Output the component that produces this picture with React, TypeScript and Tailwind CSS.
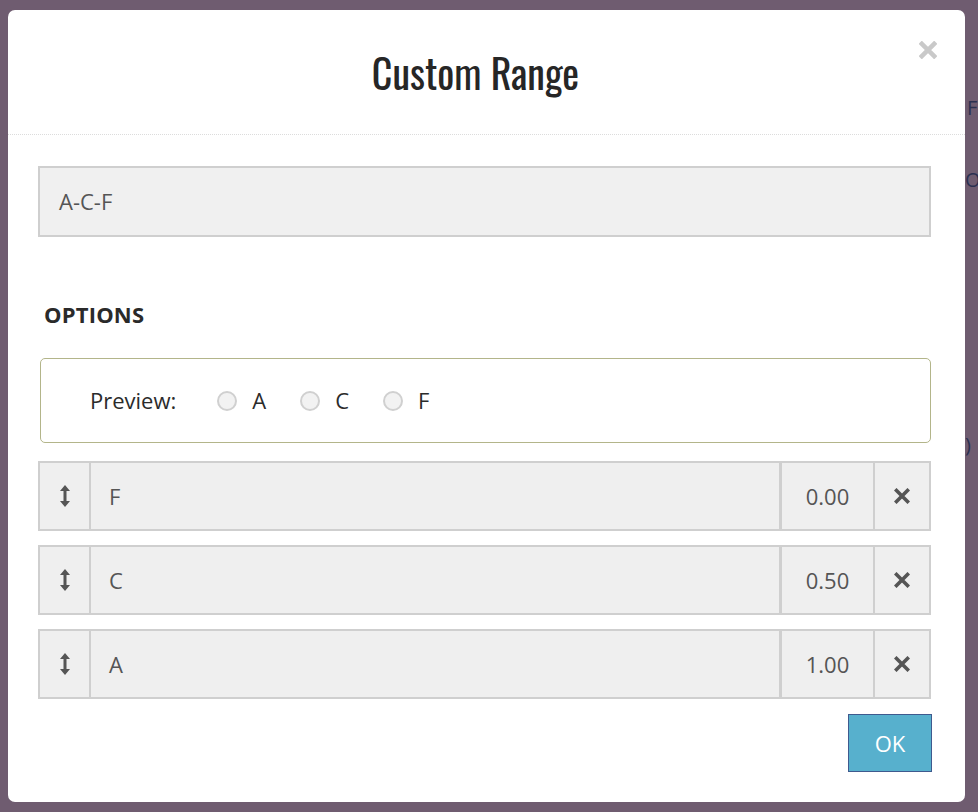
import React from "react";

const HandleIcon = () => (
  <svg width="12" height="24" viewBox="0 0 12 24" className="block">
    <path d="M6 1 L11 7 L7.5 7 L7.5 17 L11 17 L6 23 L1 17 L4.5 17 L4.5 7 L1 7 Z" fill="#555" />
  </svg>
);

const XIcon = ({ color = "#555", size = 16, stroke = 3.6 }: { color?: string; size?: number; stroke?: number }) => (
  <svg width={size} height={size} viewBox="0 0 16 16" className="block">
    <path d="M2.5 2.5 L13.5 13.5 M13.5 2.5 L2.5 13.5" stroke={color} strokeWidth={stroke} strokeLinecap="square" />
  </svg>
);

const rows = [
  { name: "F", value: "0.00" },
  { name: "C", value: "0.50" },
  { name: "A", value: "1.00" },
];

export default function App() {
  const body = { fontFamily: '"Open Sans", "Noto Sans", sans-serif' };
  return (
    <div className="relative w-[978px] h-[812px] overflow-hidden bg-[#6f5c70] pt-[10px] pl-[8px] pr-[13px] pb-[10px]" style={body}>
      <span className="absolute left-[967px] top-[98px] text-[20px] leading-none text-[#2b3050]">F</span>
      <span className="absolute left-[965px] top-[170px] text-[20px] leading-none text-[#2b3050]">O</span>
      <span className="absolute left-[965px] top-[435px] text-[20px] leading-none text-[#2b3050]">)</span>
      <div className="relative flex h-full w-full flex-col rounded-[7px] bg-white">
        <div className="relative flex h-[125px] items-center justify-center border-b border-dotted border-[#dcdcdc] pr-[22px]">
          <h1
            className="text-[40px] leading-none text-[#262626]"
            style={{ fontFamily: '"Oswald", "Liberation Sans Narrow", "DejaVu Sans Condensed", sans-serif' }}
          >
            Custom Range
          </h1>
          <button className="absolute right-[28px] top-[31px] p-0">
            <XIcon color="#c9c9c9" size={18} stroke={4} />
          </button>
        </div>
        <div className="flex flex-1 flex-col pl-[30px] pr-[34px] pt-[31px]">
          <div className="flex h-[71px] items-center border-2 border-[#cfcfcf] bg-[#f0f0f0] pl-[19px] text-[22px] text-[#555]">
            A-C-F
          </div>
          <div className="mt-[66px] pl-[6px] text-[22px] font-bold leading-none tracking-[0.2px] text-[#2a2a2a]">OPTIONS</div>
          <div className="ml-[2px] mt-[33px] flex h-[85px] items-center rounded-[5px] border border-[#b3b58a] pl-[49px] text-[22px] text-[#2b2b2b]">
            <span className="mr-[41px]">Preview:</span>
            {["A", "C", "F"].map((l) => (
              <label key={l} className="mr-[34px] flex items-center">
                <span className="mr-[15px] inline-block h-[20px] w-[20px] rounded-full border-2 border-[#d0d0d0] bg-[#f2f2f2]" />
                <span>{l}</span>
              </label>
            ))}
          </div>
          <div className="mt-[18px] flex flex-col gap-[14px]">
            {rows.map((r) => (
              <div key={r.name} className="flex h-[70px] border-2 border-[#cfcfcf] bg-[#efefef] text-[22px] text-[#555]">
                <div className="flex w-[51px] items-center justify-center border-r-2 border-[#cfcfcf]">
                  <HandleIcon />
                </div>
                <div className="flex flex-1 items-center border-r-[3px] border-[#cfcfcf] pl-[18px]">{r.name}</div>
                <div className="flex w-[93px] items-center justify-center border-r-2 border-[#cfcfcf]">{r.value}</div>
                <div className="flex w-[54px] items-center justify-center">
                  <XIcon />
                </div>
              </div>
            ))}
          </div>
          <div className="mt-[15px] flex justify-end">
            <button className="mr-[-1px] flex h-[58px] w-[84px] items-center justify-center border border-[#3f5a8e] bg-[#57b0cd] text-[22px] text-white">
              OK
            </button>
          </div>
        </div>
      </div>
    </div>
  );
}
